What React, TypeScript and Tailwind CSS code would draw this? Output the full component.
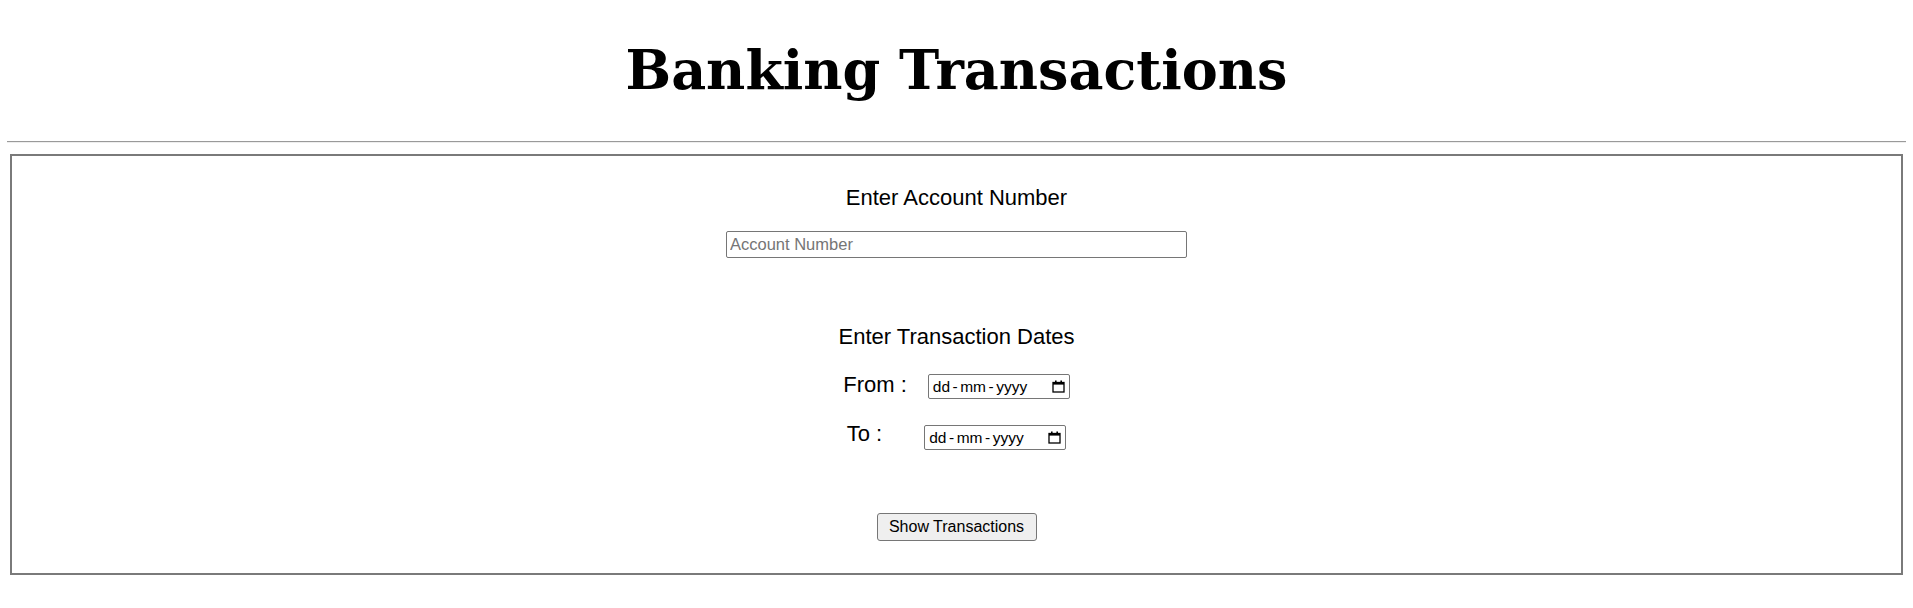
import React from "react";

function CalendarIcon() {
  return (
    <svg width="13" height="13" viewBox="0 0 13 13" className="shrink-0">
      <rect x="1" y="2.5" width="11" height="9.5" fill="none" stroke="#000" strokeWidth="1.3" />
      <rect x="1" y="2" width="11" height="2.6" fill="#000" />
      <rect x="3" y="0.5" width="1.6" height="2" fill="#000" />
      <rect x="8.4" y="0.5" width="1.6" height="2" fill="#000" />
    </svg>
  );
}

function DateBox() {
  return (
    <div className="flex h-[25px] w-[142px] items-center justify-between rounded-[2px] border border-[#767676] bg-white pl-[4px] pr-[4px] font-['Liberation_Sans',Arial,sans-serif] text-[15.5px] leading-none text-black">
      <div className="flex items-center gap-[2.5px]">
        <span>dd</span>
        <span>-</span>
        <span>mm</span>
        <span>-</span>
        <span>yyyy</span>
      </div>
      <CalendarIcon />
    </div>
  );
}

export default function App() {
  return (
    <div className="min-h-screen bg-white px-[7px] text-black">
      <h1 className="pt-[43px] text-center font-['DejaVu_Serif',serif] text-[54px] font-bold leading-none">
        Banking Transactions
      </h1>
      <div className="mt-[44px] h-[2px] border-t border-b border-t-[#9a9a9a] border-b-[#eeeeee]" />
      <div className="mx-[3px] mt-[11px] flex flex-col items-center border-2 border-[#7a7a7a] pt-[31px] pb-[32px] font-['Liberation_Sans',Arial,sans-serif]">
        <h2 className="text-[22px] leading-none">Enter Account Number</h2>
        <input
          type="text"
          placeholder="Account Number"
          className="mt-[22px] h-[27px] w-[461px] rounded-[2px] border border-[#767676] px-[3px] text-[16.5px] text-black outline-none placeholder:text-[#757575]"
        />
        <h2 className="mt-[68px] text-[22px] leading-none">Enter Transaction Dates</h2>
        <div className="mt-[26px] flex items-center gap-[21px]">
          <span className="-mt-[3px] text-[22px] leading-none">From :</span>
          <DateBox />
        </div>
        <div className="mt-[26px] flex items-center gap-[42px]">
          <span className="-mt-[7px] text-[22px] leading-none">To :</span>
          <DateBox />
        </div>
        <button
          type="button"
          className="mt-[63px] h-[28px] w-[160px] rounded-[3px] border border-[#767676] bg-[#efefef] text-[16px] leading-none text-black"
        >
          Show Transactions
        </button>
      </div>
    </div>
  );
}
